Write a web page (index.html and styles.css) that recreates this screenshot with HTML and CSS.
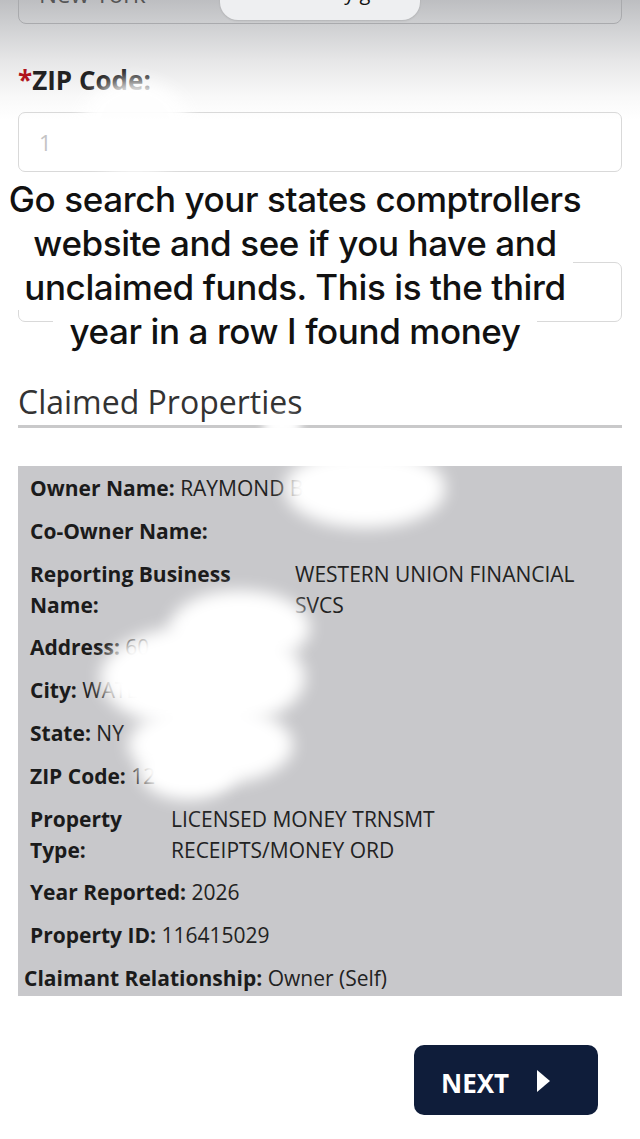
FILE: index.html
```html
<!DOCTYPE html>
<html>
<head>
	<meta charset="UTF-8">
	<title>Claimed Properties</title>
	<link rel="stylesheet" href="styles.css">
</head>
<body>
	<div class="page">
	    <div class="select"><span>New York</span></div>
	    <div class="urlbar"><span class="urlbar-dim">AA &#9679;</span> osc.ny.gov</div>

	    <label class="field-label"><span class="req">*</span>ZIP Code:</label>
	    <div class="input"><span class="input-value">1</span></div>
	    <div class="input input--second"></div>

	    <h2 class="section-title">Claimed Properties</h2>

	    <div class="details">
	        <p class="row"><b>Owner Name:</b> RAYMOND B</p>
	        <p class="row"><b>Co-Owner Name:</b></p>
	        <div class="row row--split row--wide"><b>Reporting Business Name:</b><span>WESTERN UNION FINANCIAL SVCS</span></div>
	        <p class="row"><b>Address:</b> 60</p>
	        <p class="row"><b>City:</b> WATERVI</p>
	        <p class="row"><b>State:</b> NY</p>
	        <p class="row"><b>ZIP Code:</b> 12</p>
	        <div class="row row--split row--narrow"><b>Property Type:</b><span>LICENSED MONEY TRNSMT RECEIPTS/MONEY ORD</span></div>
	        <p class="row"><b>Year Reported:</b> 2026</p>
	        <p class="row"><b>Property ID:</b> 116415029</p>
	        <p class="row row--out"><b>Claimant Relationship:</b> Owner (Self)</p>
	    </div>

	    <div class="actions">
	        <button class="btn-next">NEXT <i class="arrow"></i></button>
	    </div>

	    <!-- caption laid over the screen recording -->
	    <div class="caption">
	        <span>Go search your states comptrollers</span><br>
	        <span>website and see if you have and</span><br>
	        <span>unclaimed funds. This is the third</span><br>
	        <span>year in a row I found money</span>
	    </div>

	    <!-- white smudges hiding personal data -->
	    <i class="blob blob-zip"></i>
	    <i class="blob blob-line"></i>
	    <i class="blob blob-owner"></i>
	    <i class="blob blob-a"></i>
	    <i class="blob blob-b"></i>
	    <i class="blob blob-c"></i>
	    <i class="blob blob-d"></i>
	</div>
</body>
</html>
```

FILE: styles.css
```css
html, body {
    margin: 0;
    padding: 0;
}
body {
    font-family: "Open Sans", "Liberation Sans", sans-serif;
    color: #222;
    background: #fff;
}
.page {
    position: relative;
    width: 640px;
    height: 1139px;
    overflow: hidden;
    background: linear-gradient(#bdbec1 0, #cfd0d2 26px, #e6e6e7 60px, #f8f8f8 95px, #fff 120px) no-repeat top / 100% 120px, #fff;
}

.select {
    margin: -30px 18px 0;
    height: 52px;
    border: 1px solid #a9aaad;
    border-radius: 8px;
    position: relative;
}
.select span {
    position: absolute;
    left: 20px;
    bottom: 17px;
    font-size: 24px;
    color: #555;
    line-height: 1;
}
.urlbar {
    position: absolute;
    left: 220px;
    top: -20px;
    width: 200px;
    height: 40px;
    box-sizing: border-box;
    border-radius: 18px;
    background: #eeeff1;
    box-shadow: 0 1px 2px rgba(0,0,0,.12);
    font-size: 20px;
    line-height: 1;
    text-align: center;
    padding-top: 3px;
    color: #111;
}
.urlbar-dim {
    color: #bbb;
}

.field-label {
    display: block;
    margin: 40px 18px 0;
    font-size: 26px;
    font-weight: 700;
    line-height: 32px;
    color: #222;
}
.req {
    color: #b1141c;
}
.input {
    margin: 16px 18px 0;
    height: 60px;
    box-sizing: border-box;
    border: 1px solid #d9d9d9;
    border-radius: 7px;
    padding: 14px 20px;
    font-size: 22px;
    color: #c4c4c4;
}
.input--second {
    margin-top: 90px;
}

.section-title {
    margin: 60px 18px 0;
    padding-bottom: 3px;
    border-bottom: 3px solid #c9c9ca;
    font-size: 32px;
    font-weight: 400;
    line-height: 40px;
    color: #333;
}

.details {
    margin: 38px 18px 0;
    height: 530px;
    box-sizing: border-box;
    padding: 7px 12px 0;
    background: #c8c8cb;
    display: flex;
    flex-direction: column;
    gap: 11.8px;
}
.row {
    margin: 0;
    font-size: 21px;
    line-height: 31px;
    color: #222;
}
.row b {
    font-weight: 700;
    color: #1b1b1b;
}
.row--split {
    display: grid;
}
.row--wide {
    grid-template-columns: 265px 300px;
}
.row--wide b {
    max-width: 215px;
}
.row--narrow {
    grid-template-columns: 141px 300px;
}
.row--out {
    margin-left: -6px;
}

.actions {
    display: flex;
    justify-content: flex-end;
    padding: 49px 42px 0 0;
}
.btn-next {
    width: 184px;
    height: 70px;
    border: 0;
    border-radius: 10px;
    background: #0f1d3a;
    color: #fff;
    font-family: "Open Sans", "Liberation Sans", sans-serif;
    font-size: 26px;
    font-weight: 700;
    display: flex;
    align-items: center;
    padding: 5px 0 0 27px;
    gap: 28px;
}
.arrow {
    width: 0;
    height: 0;
    margin-top: -3px;
    border-top: 11px solid transparent;
    border-bottom: 11px solid transparent;
    border-left: 13px solid #fff;
}

.caption {
    position: absolute;
    left: -10px;
    top: 177px;
    width: 610px;
    text-align: center;
    white-space: nowrap;
    font-family: Inter, "Noto Sans", sans-serif;
    font-size: 35px;
    font-weight: 500;
    line-height: 44px;
    letter-spacing: -0.4px;
    color: #111;
}
.caption span {
    background: #fff;
    padding: 2px 16px;
    box-decoration-break: clone;
}

.blob {
    position: absolute;
    background: #fff;
    border-radius: 50%;
    filter: blur(8px);
}
.blob-zip {
    left: 80px; top: 80px;
    width: 110px; height: 95px;
    opacity: .92;
}
.blob-line {
    left: 262px; top: 416px;
    width: 40px; height: 20px;
    filter: blur(4px);
}
.blob-owner {
    left: 285px; top: 452px;
    width: 160px; height: 76px;
    border-radius: 45% 45% 50% 50%;
}
.blob-a {
    left: 170px; top: 590px;
    width: 140px; height: 75px;
}
.blob-b {
    left: 100px; top: 625px;
    width: 205px; height: 105px;
}
.blob-c {
    left: 128px; top: 705px;
    width: 165px; height: 80px;
}
.blob-d {
    left: 140px; top: 745px;
    width: 95px; height: 55px;
}
```
